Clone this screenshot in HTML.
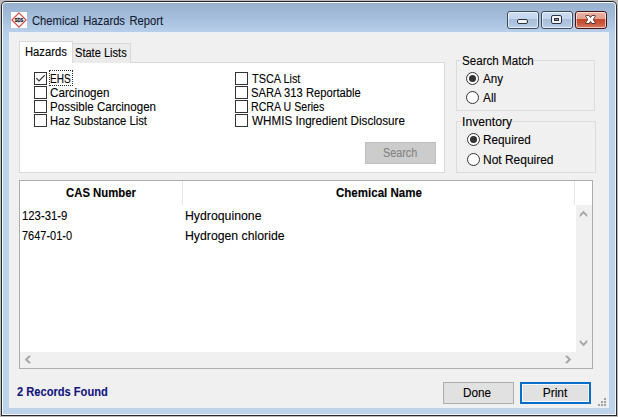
<!DOCTYPE html>
<html><head><meta charset="utf-8">
<style>
*{margin:0;padding:0;box-sizing:border-box}
html,body{width:618px;height:417px;overflow:hidden;background:#bdbcba}
body{position:relative;font-family:"Liberation Sans",sans-serif;font-size:12px;color:#000}
.a{position:absolute}
.t{position:absolute;white-space:nowrap;line-height:14px;height:14px;font-size:12px;transform-origin:0 0;-webkit-text-stroke:0.1px currentColor}
#win{left:1px;top:1px;width:616px;height:415px;background:#262a2e;border-radius:5px 5px 0 0}
#hl{left:2px;top:2px;width:614px;height:413px;background:#f2f8fd;border-radius:4px 4px 0 0}
#frame{left:3px;top:3px;width:612px;height:411px;border-radius:3px 3px 0 0;
 background:linear-gradient(#97b1cf 0px,#a4bdda 14px,#b5cde8 27px,#bdd3ea 40px,#bdd3e9 100%)}
#client{left:9px;top:32px;width:600px;height:376px;background:#f0f0f0;border:1px solid #ebf2fb}
.cb{position:absolute;width:32px;height:18px;border:1px solid #3d4b5d;border-radius:3px;overflow:hidden}
.cb .in{position:absolute;left:0;top:0;right:0;bottom:0;border:1px solid rgba(255,255,255,.6);border-radius:2px}
.chk{position:absolute;width:13px;height:13px;border:1px solid #333;background:#fff}
.rad{position:absolute;width:13px;height:13px;border:1px solid #333;border-radius:50%;background:#fff}
.rad.on:after{content:"";position:absolute;left:2px;top:2px;width:7px;height:7px;border-radius:50%;background:#333}
.btn{position:absolute;width:71px;height:22px;background:#e1e1e1;border:1px solid #adadad}
</style></head><body>
<div id="win" class="a"></div>
<div id="hl" class="a"></div>
<div id="frame" class="a"></div>

<div class="a" style="left:11px;top:12px;width:16px;height:16px;background:#fff">
 <svg width="16" height="16" viewBox="0 0 16 16" style="position:absolute;left:0;top:0">
  <path d="M8 0.9 L15.1 8 L8 15.1 L0.9 8 Z" fill="none" stroke="#d84646" stroke-width="1.15"/>
  <text x="8" y="9.9" font-family="Liberation Sans" font-size="5.4" font-weight="700" text-anchor="middle" fill="#1a1a1a" stroke="#1a1a1a" stroke-width="0.3" textLength="8.6" lengthAdjust="spacingAndGlyphs">SDS</text>
 </svg>
</div>
<div class="t" style="left:32.0px;top:14px;transform:scaleX(0.934);color:#141c32;word-spacing:1.5px">Chemical Hazards Report</div>

<div class="cb" style="left:507px;top:11px;background:linear-gradient(#cbdcf0 0,#c4d6ec 7px,#a7bdd9 7px,#aec4df 12px,#bdd1e8 100%)"><div class="in"></div>
 <div class="a" style="left:9px;top:7px;width:11px;height:5px;border:1px solid #2b3340;border-radius:2px;background:#f4f4f6"></div>
</div>
<div class="cb" style="left:541px;top:11px;background:linear-gradient(#cbdcf0 0,#c4d6ec 7px,#a7bdd9 7px,#aec4df 12px,#bdd1e8 100%)"><div class="in"></div>
 <div class="a" style="left:9px;top:3px;width:11px;height:9px;border:1px solid #2b3340;border-radius:2px;background:#f4f4f6"><div class="a" style="left:2px;top:2px;width:5px;height:3px;border:1px solid #2b3340;background:#8a93a0"></div></div>
</div>
<div class="cb" style="left:575px;top:11px;border-color:#46140e;background:linear-gradient(#ecb0a2 0,#e3a090 7px,#c2462a 7px,#c8553a 11px,#d77a66 100%)"><div class="in"></div>
 <svg class="a" style="left:9px;top:3px" width="11" height="9" viewBox="0 0 11 9">
  <polygon points="1,1 3.9,1 5.5,3.0 7.1,1 10,1 7.9,4.5 10,8 7.1,8 5.5,6.0 3.9,8 1,8 3.1,4.5" fill="#fff" stroke="#3a2626" stroke-width="1.3" stroke-linejoin="round" style="paint-order:stroke"/>
 </svg>
</div>

<div id="client" class="a"></div>

<div class="a" style="left:19px;top:62px;width:426px;height:111px;border:1px solid #d9d9d9;background:#fff"></div>
<div class="a" style="left:72px;top:43px;width:59px;height:20px;border:1px solid #d9d9d9;border-bottom:none;background:#ebebeb"></div>
<div class="a" style="left:19px;top:41px;width:54px;height:22px;border:1px solid #d9d9d9;border-bottom:none;background:#fff"></div>
<div class="t" style="left:25.1px;top:45px;transform:scaleX(0.936);">Hazards</div>
<div class="t" style="left:74.7px;top:46px;transform:scaleX(0.922);">State Lists</div>

<div class="chk" style="left:34px;top:72px"></div>
<svg class="a" style="left:34px;top:72px" width="13" height="13"><path d="M2.3 6.2 L5 9 L10.8 3.2" fill="none" stroke="#333" stroke-width="1.2"/></svg>
<div class="chk" style="left:34px;top:86px"></div>
<div class="chk" style="left:34px;top:100px"></div>
<div class="chk" style="left:34px;top:114px"></div>
<div class="a" style="left:49px;top:70px;width:24px;height:16px;border:1px dotted #333"></div>
<div class="t" style="left:50.4px;top:72px;transform:scaleX(0.837);">EHS</div>
<div class="t" style="left:50.0px;top:86px;transform:scaleX(0.97);">Carcinogen</div>
<div class="t" style="left:50.0px;top:100px;transform:scaleX(0.963);">Possible Carcinogen</div>
<div class="t" style="left:50.1px;top:114px;transform:scaleX(0.938);">Haz Substance List</div>

<div class="chk" style="left:235px;top:72px"></div>
<div class="chk" style="left:235px;top:86px"></div>
<div class="chk" style="left:235px;top:100px"></div>
<div class="chk" style="left:235px;top:114px"></div>
<div class="t" style="left:251.6px;top:72px;transform:scaleX(0.906);">TSCA List</div>
<div class="t" style="left:251.1px;top:86px;transform:scaleX(0.935);">SARA 313 Reportable</div>
<div class="t" style="left:251.1px;top:100px;transform:scaleX(0.887);">RCRA U Series</div>
<div class="t" style="left:252.0px;top:114px;transform:scaleX(0.972);">WHMIS Ingredient Disclosure</div>

<div class="btn" style="left:365px;top:142px;background:#cccccc;border-color:#bfbfbf"></div>
<div class="t" style="left:382.8px;top:146px;transform:scaleX(0.9);color:#838383">Search</div>

<div class="a" style="left:456px;top:60px;width:139px;height:51px;border:1px solid #dcdcdc"></div>
<div class="a" style="left:461px;top:54px;width:73px;height:10px;background:#f0f0f0"></div>
<div class="t" style="left:461.7px;top:54px;transform:scaleX(0.968);">Search Match</div>
<div class="rad on" style="left:466px;top:72px"></div>
<div class="t" style="left:482.5px;top:72px;transform:scaleX(0.971);">Any</div>
<div class="rad" style="left:466px;top:91px"></div>
<div class="t" style="left:482.5px;top:91px;transform:scaleX(0.992);">All</div>

<div class="a" style="left:456px;top:121px;width:140px;height:52px;border:1px solid #dcdcdc"></div>
<div class="a" style="left:461px;top:115px;width:51px;height:10px;background:#f0f0f0"></div>
<div class="t" style="left:461.9px;top:115px;transform:scaleX(1.015);">Inventory</div>
<div class="rad on" style="left:467px;top:133px"></div>
<div class="t" style="left:482.5px;top:133px;transform:scaleX(0.981);">Required</div>
<div class="rad" style="left:467px;top:153px"></div>
<div class="t" style="left:482.5px;top:153px;transform:scaleX(0.997);">Not Required</div>

<div class="a" style="left:19px;top:180px;width:574px;height:189px;border:1px solid #adadad;background:#fff"></div>
<div class="a" style="left:182px;top:181px;width:1px;height:24px;background:#e5e5e5"></div>
<div class="a" style="left:574px;top:181px;width:1px;height:24px;background:#e5e5e5"></div>
<div class="t" style="left:66.0px;top:186px;transform:scaleX(0.945);font-weight:700">CAS Number</div>
<div class="t" style="left:335.5px;top:186px;transform:scaleX(0.961);font-weight:700">Chemical Name</div>
<div class="t" style="left:22.0px;top:209px;transform:scaleX(0.945);">123-31-9</div>
<div class="t" style="left:184.8px;top:209px;transform:scaleX(1.024);">Hydroquinone</div>
<div class="t" style="left:22.4px;top:229px;transform:scaleX(0.916);">7647-01-0</div>
<div class="t" style="left:184.8px;top:229px;transform:scaleX(1.022);">Hydrogen chloride</div>
<div class="a" style="left:576px;top:205px;width:16px;height:163px;background:#f0f0f0"></div>
<div class="a" style="left:20px;top:352px;width:572px;height:16px;background:#f0f0f0"></div>
<svg class="a" style="left:0;top:0" width="618" height="417">
 <g fill="#a6a6a6">
  <polygon points="579.8,214.5 583.5,210.8 587.2,214.5 587.2,217.3 583.5,213.6 579.8,217.3"/>
  <polygon points="579.8,339.7 583.5,343.4 587.2,339.7 587.2,342.5 583.5,346.2 579.8,342.5"/>
  <polygon points="28.5,355.8 31.3,355.8 27.6,359.5 31.3,363.2 28.5,363.2 24.8,359.5"/>
  <polygon points="564.7,355.8 567.5,355.8 571.2,359.5 567.5,363.2 564.7,363.2 568.4,359.5"/>
 </g>
</svg>

<div class="t" style="left:16.8px;top:385px;transform:scaleX(0.926);font-weight:700;color:#14147e">2 Records Found</div>
<div class="btn" style="left:443px;top:382px"></div>
<div class="t" style="left:463.4px;top:386px;transform:scaleX(0.979);">Done</div>
<div class="btn" style="left:520px;top:382px;border:2px solid #0a6ec9;box-shadow:inset 0 0 0 1px #f2f9ff"></div>
<div class="t" style="left:542.7px;top:386px;transform:scaleX(1.0);">Print</div>
<div class="a" style="left:604px;top:398px;width:2px;height:2px;background:#a0a0a0"></div>
<div class="a" style="left:601px;top:401px;width:2px;height:2px;background:#a0a0a0"></div>
<div class="a" style="left:604px;top:401px;width:2px;height:2px;background:#a0a0a0"></div>
<div class="a" style="left:598px;top:404px;width:2px;height:2px;background:#a0a0a0"></div>
<div class="a" style="left:601px;top:404px;width:2px;height:2px;background:#a0a0a0"></div>
<div class="a" style="left:604px;top:404px;width:2px;height:2px;background:#a0a0a0"></div>
</body></html>
